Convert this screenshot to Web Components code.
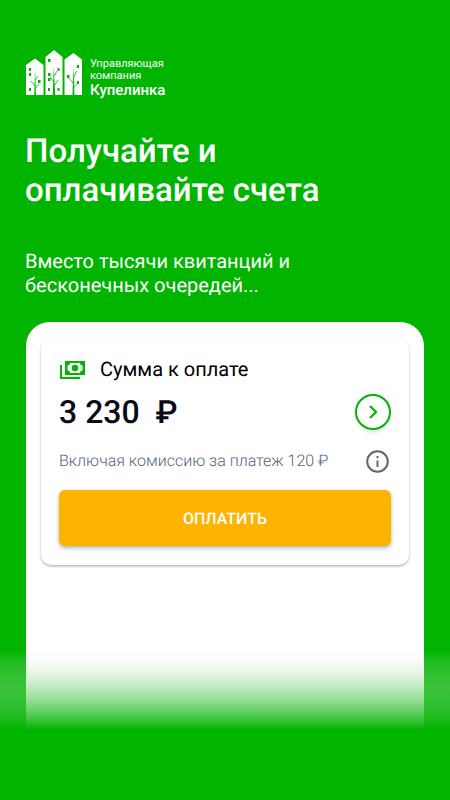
<!DOCTYPE html>
<html lang="ru">
<head>
<meta charset="utf-8">
<meta name="viewport" content="width=device-width, initial-scale=1">
<title>Купелинка</title>
<style>
  body {
    margin: 0;
    background: #00b400;
    font-family: Roboto, "Liberation Sans", sans-serif;
    text-rendering: geometricPrecision;
  }
</style>
</head>
<body>
<promo-screen>
  <company-logo slot="logo">
    <span slot="kind">Управляющая<br>компания</span>
    Купелинка
  </company-logo>
  <span slot="title">Получайте и<br>оплачивайте счета</span>
  <span slot="lead">Вместо тысячи квитанций и<br>бесконечных очередей...</span>
  <payment-card>
    <span slot="label">Сумма к оплате</span>
    <span slot="amount">3 230&nbsp; ₽</span>
    <span slot="note">Включая комиссию за платеж 120 ₽</span>
    <span slot="action">ОПЛАТИТЬ</span>
  </payment-card>
</promo-screen>

<script>
const screenTemplate = document.createElement("template");
screenTemplate.innerHTML = `
  <style>
    :host {
      display: flex;
      flex-direction: column;
      min-height: 100vh;
      box-sizing: border-box;
      padding: 50px 0 70px;
      color: #fff;
    }

    header {
      padding: 0 25px;
    }

    h1 {
      margin: 33px 0 0;
      font-size: 33px;
      line-height: 39px;
      font-weight: 500;
    }

    p {
      margin: 39px 0 0;
      font-size: 20px;
      line-height: 24px;
    }

    main {
      position: relative;
      display: flex;
      flex: 1;
      margin-top: 25px;
      padding: 0 26px;
    }

    .panel {
      flex: 1;
      padding: 17px 15px 165px;
      border-radius: 24px 24px 0 0;
      background: #fff;
    }

    /* straight-alpha white to green, so the side margins glow too */
    .fade {
      position: absolute;
      left: 0;
      right: 0;
      bottom: 0;
      height: 80px;
      background: linear-gradient(
        rgba(255, 255, 255, 0),
        rgba(215, 241, 215, 0.125),
        rgba(175, 228, 175, 0.25),
        rgba(140, 217, 140, 0.375),
        rgba(112, 208, 112, 0.5),
        rgba(84, 200, 84, 0.625),
        rgba(56, 194, 56, 0.75),
        rgba(28, 187, 28, 0.875),
        rgb(0, 180, 0)
      );
      pointer-events: none;
    }
  </style>

  <header>
    <slot name="logo"></slot>
    <h1><slot name="title"></slot></h1>
    <p><slot name="lead"></slot></p>
  </header>
  <main>
    <div class="panel"><slot></slot></div>
    <div class="fade"></div>
  </main>
`;

class PromoScreen extends HTMLElement {
  constructor() {
    super();
    this.attachShadow({ mode: "open" });
    this.shadowRoot.appendChild(screenTemplate.content.cloneNode(true));
  }
}

const logoTemplate = document.createElement("template");
logoTemplate.innerHTML = `
  <style>
    :host {
      display: flex;
      align-items: flex-start;
      gap: 8px;
    }

    svg {
      width: 57px;
      height: 46px;
    }

    .kind {
      padding-top: 8px;
      font-size: 11px;
      line-height: 12px;
    }

    .name {
      font-size: 15px;
      line-height: 17px;
      font-weight: 500;
    }
  </style>

  <svg viewBox="-1 0 57 46" aria-hidden="true">
    <path fill="#fff" d="M0 45V15l9-6.500L17.500 15v30zM19.500 45V7L28 0l8.500 7v38zM38.500 45V9.500L47.500 3 56 9.500V45z"/>
    <g fill="#00b400">
      <path d="M3 18h2v3H3zM3 23h2v3H3zM12 30h2.500v3H12zM3 38h2v3H3z"/>
      <path d="M22 9h2.500v3H22zM31.500 18h2v3h-2zM22 23h2.500v3H22zM22 28h2.500v3H22zM31.500 38h2v3h-2zM22 38h2v3h-2z"/>
      <path d="M51 15h2v3h-2zM41 25h2.500v3H41zM51 31h2v3h-2z"/>
      <path d="M8.300 45l.7-26 1 26zM26.800 45l1-28 1.400 28zM46.500 45l.8-29 1.200 29z"/>
    </g>
    <g fill="none" stroke="#00b400" stroke-width=".8">
      <path d="M9 39l4-5M9 36l-4-5M9 30l3-4M28 36l4-6M28 32l-4-5M28 26l3-5M47.500 38l4-5M47 33l-4-5M47.500 28l3-7"/>
    </g>
  </svg>
  <div>
    <div class="kind"><slot name="kind"></slot></div>
    <div class="name"><slot></slot></div>
  </div>
`;

class CompanyLogo extends HTMLElement {
  constructor() {
    super();
    this.attachShadow({ mode: "open" });
    this.shadowRoot.appendChild(logoTemplate.content.cloneNode(true));
  }
}

const cardTemplate = document.createElement("template");
cardTemplate.innerHTML = `
  <style>
    :host {
      display: block;
      padding: 18px 18px 19px;
      border-radius: 10px;
      background: #fff;
      box-shadow: 0 1px 3px rgba(0, 0, 0, 0.2), 0 2px 3px -1px rgba(0, 0, 0, 0.2);
      color: #000;
    }

    svg {
      display: block;
    }

    .row {
      display: flex;
      align-items: center;
      justify-content: space-between;
    }

    .label {
      justify-content: flex-start;
      gap: 14px;
      font-size: 20px;
      line-height: 24px;
    }

    .sum {
      margin-top: 12px;
      color: #0a0a14;
      font-size: 32px;
      line-height: 38px;
      font-weight: 500;
    }

    .note {
      margin-top: 18px;
      color: #52647c;
      font-size: 16px;
      line-height: 24px;
      font-weight: 300;
    }

    button {
      padding: 0;
      border: 0;
      background: none;
      font: inherit;
      text-rendering: inherit;
      cursor: pointer;
    }

    .next {
      width: 36px;
      height: 36px;
      border-radius: 50%;
      box-shadow: 0 2px 4px rgba(0, 0, 0, 0.12);
    }

    .info {
      margin-right: 2px;
    }

    .pay {
      width: 100%;
      height: 56px;
      margin-top: 17px;
      border-radius: 6px;
      background: #fcb400;
      box-shadow: 0 2px 4px rgba(0, 0, 0, 0.3);
      color: #fff;
      font-size: 16px;
      font-weight: 500;
    }
  </style>

  <div class="row label">
    <svg width="27" height="20" viewBox="0 0 27 20" aria-hidden="true">
      <path fill="none" stroke="#00b400" stroke-width="2" d="M2 6v13h19"/>
      <path fill="#00b400" fill-rule="evenodd" d="M6 2h20v14H6zM11 4c0 1.500-1 2.500-2.500 2.500v5c1.500 0 2.500 1 2.500 2.500h10c0-1.500 1-2.500 2.500-2.500v-5C22 6.500 21 5.500 21 4z"/>
      <circle cx="16" cy="9" r="3.300" fill="#00b400"/>
    </svg>
    <slot name="label"></slot>
  </div>
  <div class="row sum">
    <slot name="amount"></slot>
    <button class="next" type="button" aria-label="Подробнее">
      <svg width="36" height="36" viewBox="0 0 36 36" fill="none" stroke="#00b400" stroke-width="2">
        <circle cx="18" cy="18" r="17"/>
        <path stroke-width="2.200" d="M15 12l6 6-6 6"/>
      </svg>
    </button>
  </div>
  <div class="row note">
    <slot name="note"></slot>
    <button class="info" type="button" aria-label="Информация о комиссии">
      <svg width="23" height="23" viewBox="0 0 23 23" fill="none" stroke="#666" stroke-width="2">
        <circle cx="11.500" cy="11.500" r="10.300"/>
        <path d="M11.500 10.500v6.500M11.500 6v2.200"/>
      </svg>
    </button>
  </div>
  <button class="pay" type="button"><slot name="action"></slot></button>
`;

class PaymentCard extends HTMLElement {
  constructor() {
    super();
    this.attachShadow({ mode: "open" });
    this.shadowRoot.appendChild(cardTemplate.content.cloneNode(true));
  }
}

customElements.define("promo-screen", PromoScreen);
customElements.define("company-logo", CompanyLogo);
customElements.define("payment-card", PaymentCard);
</script>
</body>
</html>
